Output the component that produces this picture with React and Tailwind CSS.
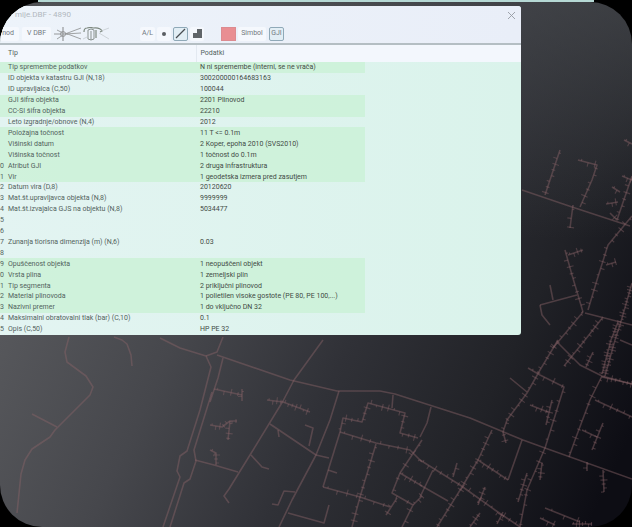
import React, { useState } from 'react';
import clsx from 'clsx';

const rows = [
  { tip: 'Tip spremembe podatkov', value: 'N ni spremembe (interni, se ne vrača)', coded: true },
  { tip: 'ID objekta v katastru GJI (N,18)', value: '300200000164683163' },
  { tip: 'ID upravljalca (C,50)', value: '100044' },
  { tip: 'GJI šifra objekta', value: '2201 Plinovod', coded: true },
  { tip: 'CC-SI šifra objekta', value: '22210', coded: true },
  { tip: 'Leto izgradnje/obnove (N,4)', value: '2012' },
  { tip: 'Položajna točnost', value: '11 T <= 0.1m', coded: true },
  { tip: 'Višinski datum', value: '2 Koper, epoha 2010 (SVS2010)', coded: true },
  { tip: 'Višinska točnost', value: '1 točnost do 0.1m', coded: true },
  { no: '0', tip: 'Atribut GJI', value: '2 druga infrastruktura', coded: true },
  { no: '1', tip: 'Vir', value: '1 geodetska izmera pred zasutjem', coded: true },
  { no: '2', tip: 'Datum vira (D,8)', value: '20120620' },
  { no: '3', tip: 'Mat.št.upravljavca objekta (N,8)', value: '9999999' },
  { no: '4', tip: 'Mat.št.izvajalca GJS na objektu (N,8)', value: '5034477' },
  { no: '5', tip: '', value: '' },
  { no: '6', tip: '', value: '' },
  { no: '7', tip: 'Zunanja tlorisna dimenzija (m) (N,6)', value: '0.03' },
  { no: '8', tip: '', value: '' },
  { no: '9', tip: 'Opuščenost objekta', value: '1 neopuščeni objekt', coded: true },
  { no: '0', tip: 'Vrsta plina', value: '1 zemeljski plin', coded: true },
  { no: '1', tip: 'Tip segmenta', value: '2 priključni plinovod', coded: true },
  { no: '2', tip: 'Material plinovoda', value: '1 polietilen visoke gostote (PE 80, PE 100,...)', coded: true },
  { no: '3', tip: 'Nazivni premer', value: '1 do vključno DN 32', coded: true },
  { no: '4', tip: 'Maksimalni obratovalni tlak (bar) (C,10)', value: '0.1' },
  { no: '5', tip: 'Opis (C,50)', value: 'HP PE 32' },
];

// Main pipes, drawn without house connections
const mains = [
  '69,337 65,352 67,362 86,376 93,387 90,395 72,413 55,430 50,437 32,449 25,460 21,474 17,513',
  '32,414 57,427',
  '114,337 122,340 127,344 131,355 132,366',
  '160,338 180,348 206,356 211,367 200,410 187,451 180,456 177,471 180,477 163,527',
  '223,337 217,352 206,356',
  '212,392 194,450 196,461 190,479 184,483 170,527',
  '195,460 214,465 238,472',
  '217,355 290,380 337,391 380,391 395,394 420,402 470,418 523,440 545,448 632,479',
  '223,358 218,378 214,390 210,402',
  '323,340 294,380 283,401 250,455 229,489 224,496 229,503',
  '270,424 316,455 329,458',
  '339,391 330,420 316,455 292,500 279,527',
  '305,425 313,428 309,446',
  '251,455 262,467 269,469',
  '272,504 278,505 284,491 295,492',
  '288,513 324,523 329,505',
  '393,395 392,408',
  '340,432 323,487',
  '328,470 337,473',
  '431,407 427,423 420,437',
  '510,378 527,392',
  '558,343 580,365 602,376 632,384',
  '522,190 572,207 630,226',
  '540,305 577,295',
  '540,305 542,315 550,325',
  '550,285 553,300',
  '585,313 632,325',
  '620,340 632,345',
  '420,485 448,501',
  '433,470 420,497',
  '522,440 508,480',
  '278,430 279,437',
];

// Pipes with short connections every few units
const served = [
  { path: '214,389 242,395', step: 7 },
  { path: '242,389 242,401', step: 5 },
  { path: '267,400 283,402 310,412', step: 4 },
  { path: '210,425 222,427 230,421 237,421', step: 4 },
  { path: '230,421 228,440', step: 5 },
  { path: '210,450 216,453 216,465', step: 4 },
  { path: '340,432 343,418 362,422 368,403 405,413 400,433 418,438', step: 6 },
  { path: '340,432 376,443 410,450 422,462', step: 9 },
  { path: '376,444 360,497 352,527', step: 7 },
  { path: '323,487 360,497 390,507', step: 10 },
  { path: '397,498 386,515', step: 7 },
  { path: '422,440 400,473 392,493 413,505 402,527', step: 12 },
  { path: '400,473 422,486', step: 5 },
  { path: '413,505 422,496', step: 5 },
  { path: '558,340 540,370 527,393 507,420 503,432 506,443', step: 6 },
  { path: '528,368 540,375 564,387 545,448 527,490 520,527', step: 10 },
  { path: '602,376 590,400 575,440 569,457', step: 9 },
  { path: '595,400 632,417', step: 7 },
  { path: '582,430 597,437', step: 7 },
  { path: '603,423 592,450', step: 6 },
  { path: '632,283 620,325 615,340 605,376', step: 3 },
  { path: '618,322 611,340 602,374', step: 3 },
  { path: '603,317 585,340 564,366', step: 5 },
  { path: '593,352 586,367', step: 4 },
  { path: '602,377 632,384', step: 4 },
  { path: '492,430 478,460 462,487 437,527', step: 6 },
  { path: '478,460 508,480', step: 5 },
  { path: '420,460 460,485 495,510 520,527', step: 7 },
  { path: '453,477 457,463', step: 6 },
  { path: '478,505 485,487', step: 5 },
  { path: '470,527 480,513', step: 4 },
  { path: '497,524 503,512', step: 4 },
  { path: '527,473 518,502', step: 5 },
  { path: '542,463 540,480', step: 4 },
  { path: '545,508 580,522', step: 14 },
  { path: '540,518 555,525', step: 6 },
  { path: '572,524 592,524', step: 3 },
  { path: '603,470 604,492', step: 4 },
  { path: '587,462 587,471', step: 4 },
  { path: '552,400 546,425', step: 5 },
  { path: '530,405 548,412', step: 5 },
  { path: '560,150 545,195', step: 6 },
  { path: '578,160 597,165 592,180 580,207', step: 7 },
  { path: '573,205 570,228', step: 9 },
  { path: '632,176 617,220 610,213', step: 7 },
  { path: '632,216 608,245 597,280 588,310', step: 7 },
  { path: '565,250 572,275 583,312', step: 7 },
  { path: '568,255 583,250', step: 4 },
  { path: '583,312 553,348', step: 6 },
  { path: '612,187 620,192', step: 4 },
  { path: '606,204 618,202', step: 4 },
  { path: '606,265 616,262', step: 4 },
  { path: '624,140 632,144', step: 4 },
  { path: '622,176 632,180', step: 4 },
];

function connections(path, step) {
  const points = path.split(' ').map((p) => p.split(',').map(Number));
  let d = '';
  let n = 0;
  for (let i = 0; i < points.length - 1; i++) {
    const [x1, y1] = points[i];
    const [x2, y2] = points[i + 1];
    const length = Math.hypot(x2 - x1, y2 - y1);
    const ux = (x2 - x1) / length;
    const uy = (y2 - y1) / length;
    for (let t = step / 2; t < length; t += step) {
      const left = n % 4 === 1 ? 0 : 2 + (n % 3);
      const right = n % 4 === 0 ? 0 : 2 + ((n * 2) % 3);
      const x = x1 + ux * t;
      const y = y1 + uy * t;
      d += `M${x + uy * left} ${y - ux * left}L${x - uy * right} ${y + ux * right}`;
      n++;
    }
  }
  return d;
}

function NetworkMap() {
  return (
    <svg
      className="absolute inset-0 w-full h-full"
      viewBox="0 2 632 525"
      preserveAspectRatio="xMinYMin slice"
      fill="none"
      stroke="#8a6469"
      aria-hidden="true"
    >
      <g strokeOpacity="0.45" strokeWidth="1.6" strokeLinejoin="round">
        {mains.map((points) => <polyline key={points} points={points} />)}
        {served.map(({ path }) => <polyline key={path} points={path} />)}
      </g>
      <g strokeOpacity="0.4" strokeWidth="1.2">
        {served.map(({ path, step }) => <path key={path} d={connections(path, step)} />)}
      </g>
    </svg>
  );
}

function ToolButton({ className, active, children, ...props }) {
  return (
    <button
      type="button"
      className={clsx(
        'h-[14px] shrink-0 flex items-center justify-center rounded-xs border',
        active ? 'border-[#8fa9b8] bg-[#e2eef5]' : 'border-transparent bg-[#f5f8fd]',
        className
      )}
      {...props}
    >
      {children}
    </button>
  );
}

function Toolbar() {
  const [shape, setShape] = useState('line');

  return (
    <div className="flex items-center h-[19px] text-[#73797f]">
      <ToolButton className="w-[19px] mr-[3px] justify-end pr-1">nod</ToolButton>
      <ToolButton className="w-[29px] mr-[3px]">V DBF</ToolButton>
      <button type="button" aria-label="Vozlišče" className="mr-[2px]">
        <svg width="27" height="14" viewBox="0 0 27 14" fill="none" stroke="#96989a">
          <path d="M0 7H14M9 0V14" strokeWidth="1.2" />
          <circle cx="9" cy="7" r="2.5" />
          <path d="M3 3L9 6M3 12L9 8M11 7L27 1M11 6L27 12M11 7L27 6" strokeWidth="0.9" />
        </svg>
      </button>
      <button type="button" aria-label="Segment" className="mr-[30px]">
        <svg width="27" height="14" viewBox="0 0 27 14" fill="none" stroke="#8b9391">
          <path d="M5 3V12Q8 14 11 12V3M5 3Q8 1 11 3M8 4V13" />
          <path d="M1 5Q1 1 4 1Q8 0 10 1Q17 0 19 4L17 5M13 3V11" stroke="#7d887f" strokeWidth="1.2" />
          <path d="M0 12L4 10M16 6L26 12M18 4L26 1" strokeWidth="0.6" stroke="#b8c0c3" />
        </svg>
      </button>
      <ToolButton className="w-[15px] mr-[2px]" active={shape === 'label'} onClick={() => setShape('label')}>A/L</ToolButton>
      <ToolButton className="w-[14px] mr-[2px]" active={shape === 'point'} onClick={() => setShape('point')} aria-label="Točka">
        <span className="size-1 rounded-full bg-[#5a5e62]" />
      </ToolButton>
      <ToolButton className="w-[15px] mr-[2px]" active={shape === 'line'} onClick={() => setShape('line')} aria-label="Linija">
        <svg width="11" height="11" viewBox="0 0 11 11" className="shrink-0" stroke="#484d51" strokeWidth="1.2">
          <path d="M1 10L10 1" />
        </svg>
      </ToolButton>
      <ToolButton className="w-[14px] mr-[17px]" active={shape === 'area'} onClick={() => setShape('area')} aria-label="Poligon">
        <svg width="10" height="10" viewBox="0 0 10 10" className="shrink-0" fill="#606569">
          <path d="M5 0H10V9H1V4H5Z" />
        </svg>
      </ToolButton>
      <button type="button" aria-label="Barva" className="w-[15px] h-[14px] mr-[2px] bg-[#e98e92] border border-[#dc8b90]" />
      <ToolButton className="w-[28px] mr-[3px]">Simbol</ToolButton>
      <ToolButton className="w-[15px]" active>GJI</ToolButton>
    </div>
  );
}

function AttributeTable() {
  return (
    <table className="w-full table-fixed border-collapse text-left whitespace-nowrap">
      <colgroup>
        <col className="w-[4px]" />
        <col className="w-[192px]" />
        <col className="w-[169px]" />
        <col />
      </colgroup>
      <thead>
        <tr className="h-[17px] bg-[#f3f7fd]">
          <th className="p-0" />
          <th className="p-0 pl-1 font-normal border-r border-[#e3e9f1]">Tip</th>
          <th className="p-0 pl-1 font-normal">Podatki</th>
          <th className="p-0" />
        </tr>
      </thead>
      <tbody className="h-[273px] leading-[10px]">
        {rows.map((row, i) => {
          const fill = row.coded && 'bg-[#caf1d6]/80';
          return (
            <tr key={i}>
              <td className={clsx('p-0', fill)}>{row.no}</td>
              <td className={clsx('p-0 pl-1', fill)}>{row.tip}</td>
              <td className={clsx('p-0 pl-1 text-[#3f4b45]', fill)}>{row.value}</td>
              <td className="p-0" />
            </tr>
          );
        })}
      </tbody>
    </table>
  );
}

export default function App() {
  return (
    <div className="min-h-screen flex flex-col bg-black font-['Roboto',sans-serif] text-[7px] text-[#52635d]">
      <div className="h-[2px] mx-[38px] bg-[#b5d8d4]" />
      <main className="relative flex-1 overflow-hidden rounded-[42px] bg-[linear-gradient(to_bottom,#4b4e5299,transparent_45%),linear-gradient(115deg,#56575b_18%,#46474c_38%,#303137_58%,#212227_77%,#0d0d14_95%)]">
        <NetworkMap />
        <section className="relative mt-1 mr-[111px] overflow-hidden rounded-r-[3px] bg-linear-to-r from-[#e3f4f2] to-[#daf3eb]">
          <div className="bg-linear-to-r from-[#edf3fa] to-[#e9eef8] border-b-2 border-[#b4bec3]">
            <header className="flex items-center justify-between h-[18px] pl-[15px] pr-[5px]">
              <h1 className="text-[8px] text-[#b2b9c0]">mije.DBF - 4890</h1>
              <button type="button" aria-label="Zapri">
                <svg width="9" height="9" viewBox="0 0 9 9" stroke="#959aa2" strokeWidth="0.9">
                  <path d="M1 1L8 8M8 1L1 8" />
                </svg>
              </button>
            </header>
            <Toolbar />
          </div>
          <AttributeTable />
        </section>
      </main>
    </div>
  );
}
